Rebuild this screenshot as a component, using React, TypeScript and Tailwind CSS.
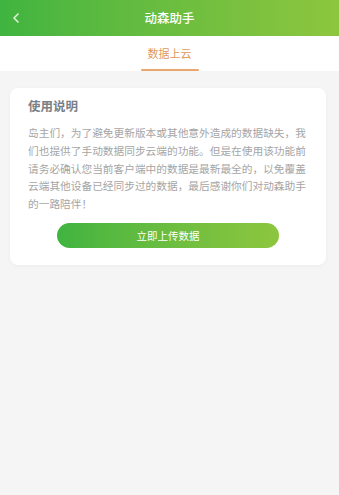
import React from "react";

const font = { fontFamily: '"Noto Sans CJK SC", "Noto Sans", sans-serif' };

export default function App() {
  return (
    <div style={font} className="flex h-[495px] w-[339px] flex-col overflow-hidden bg-[#f5f5f5]">
      <header className="relative flex h-[36px] flex-shrink-0 items-center justify-center bg-gradient-to-r from-[#3fb440] to-[#8dc63e]">
        <button type="button" aria-label="返回" className="absolute left-[11px] top-[12px] text-white">
          <svg width="10" height="12" viewBox="0 0 10 12" fill="none">
            <path d="M7 2L3 6l4 4" stroke="#e8f7d8" strokeWidth="1.5" strokeLinecap="round" strokeLinejoin="round" />
          </svg>
        </button>
        <h1 className="text-[12.5px] font-medium text-white">动森助手</h1>
      </header>

      <nav className="flex h-[35px] flex-shrink-0 justify-center bg-white">
        <div className="flex h-full w-[58px] flex-col items-center justify-between">
          <span className="pt-[9px] text-[11px] leading-[16px] text-[#e19a5c]">数据上云</span>
          <span className="h-[2px] w-full rounded-full bg-[#e9a76f]" />
        </div>
      </nav>

      <main className="flex-1 pt-[17px]">
        <section className="mx-[10px] w-[316px] rounded-[8px] bg-white px-[18px] pb-[17px] pt-[8px] shadow-[0_1px_4px_rgba(0,0,0,0.04)]">
          <h2 className="text-[12.5px] font-bold leading-[20px] text-[#7b7f86]">使用说明</h2>
          <p className="mt-[8px] text-[10.7px] leading-[17.8px] text-[#a5a5a5]">
            岛主们，为了避免更新版本或其他意外造成的数据缺失，我们也提供了手动数据同步云端的功能。但是在使用该功能前请务必确认您当前客户端中的数据是最新最全的，以免覆盖云端其他设备已经同步过的数据，最后感谢你们对动森助手的一路陪伴！
          </p>
          <button
            type="button"
            className="mx-auto mt-[10px] flex h-[25px] w-[222px] items-center justify-center rounded-full bg-gradient-to-r from-[#3fb440] to-[#8dc63e] text-[10.5px] text-white"
          >
            立即上传数据
          </button>
        </section>
      </main>
    </div>
  );
}
